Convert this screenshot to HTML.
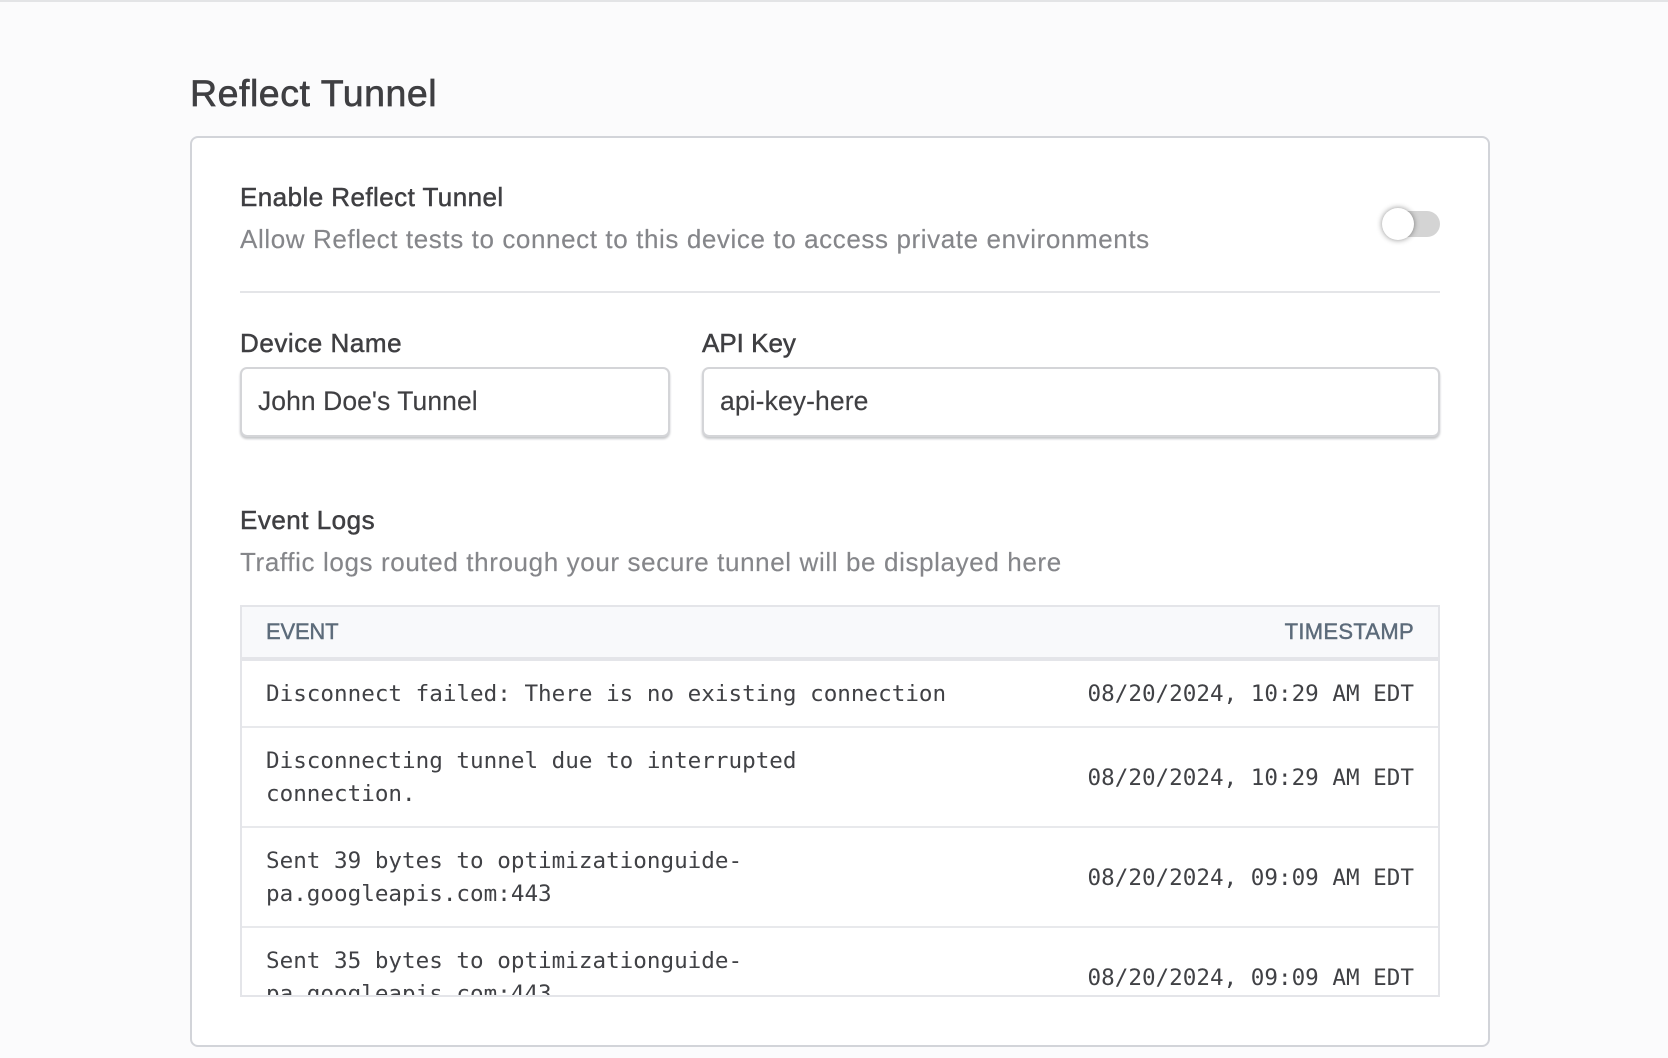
<!DOCTYPE html>
<html lang="en"><head><meta charset="utf-8"><title>Reflect Tunnel</title>
<style>
html,body{margin:0;padding:0;width:1668px;height:1058px;overflow:hidden;background:#fbfbfc}
body{position:relative;font-family:"Liberation Sans",sans-serif;color:#3f3f42}
.a{position:absolute;white-space:nowrap}
.t{line-height:40px;height:40px}
.lab{font-size:26px;-webkit-text-stroke:.5px #3f3f42;color:#3f3f42}
.desc{font-size:26px;letter-spacing:.6px;color:#85868a;-webkit-text-stroke:.15px #85868a}
.m{font-family:"DejaVu Sans Mono",monospace;font-size:22.6px;line-height:34px;height:34px;color:#404145}
.hl{height:2px;background:#e8e9ec;left:0;width:1124px}
.inp{box-sizing:border-box;background:#fff;border:2px solid #d4d5d8;border-radius:7px;box-shadow:0 2px 2px #c6c7ca}
</style></head><body>
<div class="a" style="left:0;top:0;width:1668px;height:2px;background:#e3e4e6"></div>
<div class="a t" style="left:190px;top:73px;font-size:37.5px;letter-spacing:.53px;-webkit-text-stroke:.65px #3f3f42;color:#3f3f42">Reflect Tunnel</div>
<div class="a" style="left:190px;top:136px;width:1300px;height:911px;box-sizing:border-box;background:#fff;border:2px solid #d2d4d9;border-radius:8px"></div>
<div class="a t lab" style="left:240px;top:177px;letter-spacing:.44px">Enable Reflect Tunnel</div>
<div class="a t desc" style="left:240px;top:219px">Allow Reflect tests to connect to this device to access private environments</div>
<div class="a" style="left:1384px;top:211px;width:56px;height:26px;border-radius:13px;background:#d4d4d4"></div>
<div class="a" style="left:1382px;top:208px;width:32px;height:32px;border-radius:50%;background:#fff;box-shadow:0 0 6px rgba(0,0,0,.45)"></div>
<div class="a" style="left:240px;top:291px;width:1200px;height:2px;background:#e4e5e8"></div>
<div class="a t lab" style="left:240px;top:323px;letter-spacing:.55px">Device Name</div>
<div class="a t lab" style="left:702px;top:323px">API Key</div>
<div class="a inp" style="left:240px;top:367px;width:430px;height:70px"></div>
<div class="a inp" style="left:702px;top:367px;width:738px;height:70px"></div>
<div class="a t" style="left:258px;top:381px;font-size:26.5px;letter-spacing:.06px;color:#3f3f42;-webkit-text-stroke:.15px #3f3f42">John Doe's Tunnel</div>
<div class="a t" style="left:720px;top:381px;font-size:26.5px;letter-spacing:.1px;color:#3f3f42;-webkit-text-stroke:.15px #3f3f42">api-key-here</div>
<div class="a t lab" style="left:240px;top:500px;letter-spacing:.5px">Event Logs</div>
<div class="a t desc" style="left:240px;top:542px;letter-spacing:.62px">Traffic logs routed through your secure tunnel will be displayed here</div>
<div class="a" style="left:240px;top:605px;width:1200px;height:392px;box-sizing:border-box;border:2px solid #e4e5e9;overflow:hidden;background:#fff">
<div class="a" style="left:0;top:0;width:1196px;height:50px;background:#f8f9fb"></div>
<div class="a" style="left:0;top:50px;width:1196px;height:4px;background:#e4e5e9"></div>
<div class="a" style="left:24px;top:5px;font-size:22px;line-height:40px;letter-spacing:-.2px;color:#5c6b7a;-webkit-text-stroke:.45px #5c6b7a">EVENT</div>
<div class="a" style="right:24px;top:5px;font-size:22px;line-height:40px;letter-spacing:.3px;color:#5c6b7a;-webkit-text-stroke:.45px #5c6b7a">TIMESTAMP</div>
<div class="a hl" style="top:119px;width:1196px"></div>
<div class="a hl" style="top:219px;width:1196px"></div>
<div class="a hl" style="top:319px;width:1196px"></div>
<div class="a m" style="left:24px;top:70px">Disconnect failed: There is no existing connection</div>
<div class="a m" style="right:24px;top:70px">08/20/2024, 10:29 AM EDT</div>
<div class="a m" style="left:24px;top:137px">Disconnecting tunnel due to interrupted</div>
<div class="a m" style="left:24px;top:170px">connection.</div>
<div class="a m" style="right:24px;top:154px">08/20/2024, 10:29 AM EDT</div>
<div class="a m" style="left:24px;top:237px">Sent 39 bytes to optimizationguide-</div>
<div class="a m" style="left:24px;top:270px">pa.googleapis.com:443</div>
<div class="a m" style="right:24px;top:254px">08/20/2024, 09:09 AM EDT</div>
<div class="a m" style="left:24px;top:337px">Sent 35 bytes to optimizationguide-</div>
<div class="a m" style="left:24px;top:370px">pa.googleapis.com:443</div>
<div class="a m" style="right:24px;top:354px">08/20/2024, 09:09 AM EDT</div>
</div>
</body></html>
